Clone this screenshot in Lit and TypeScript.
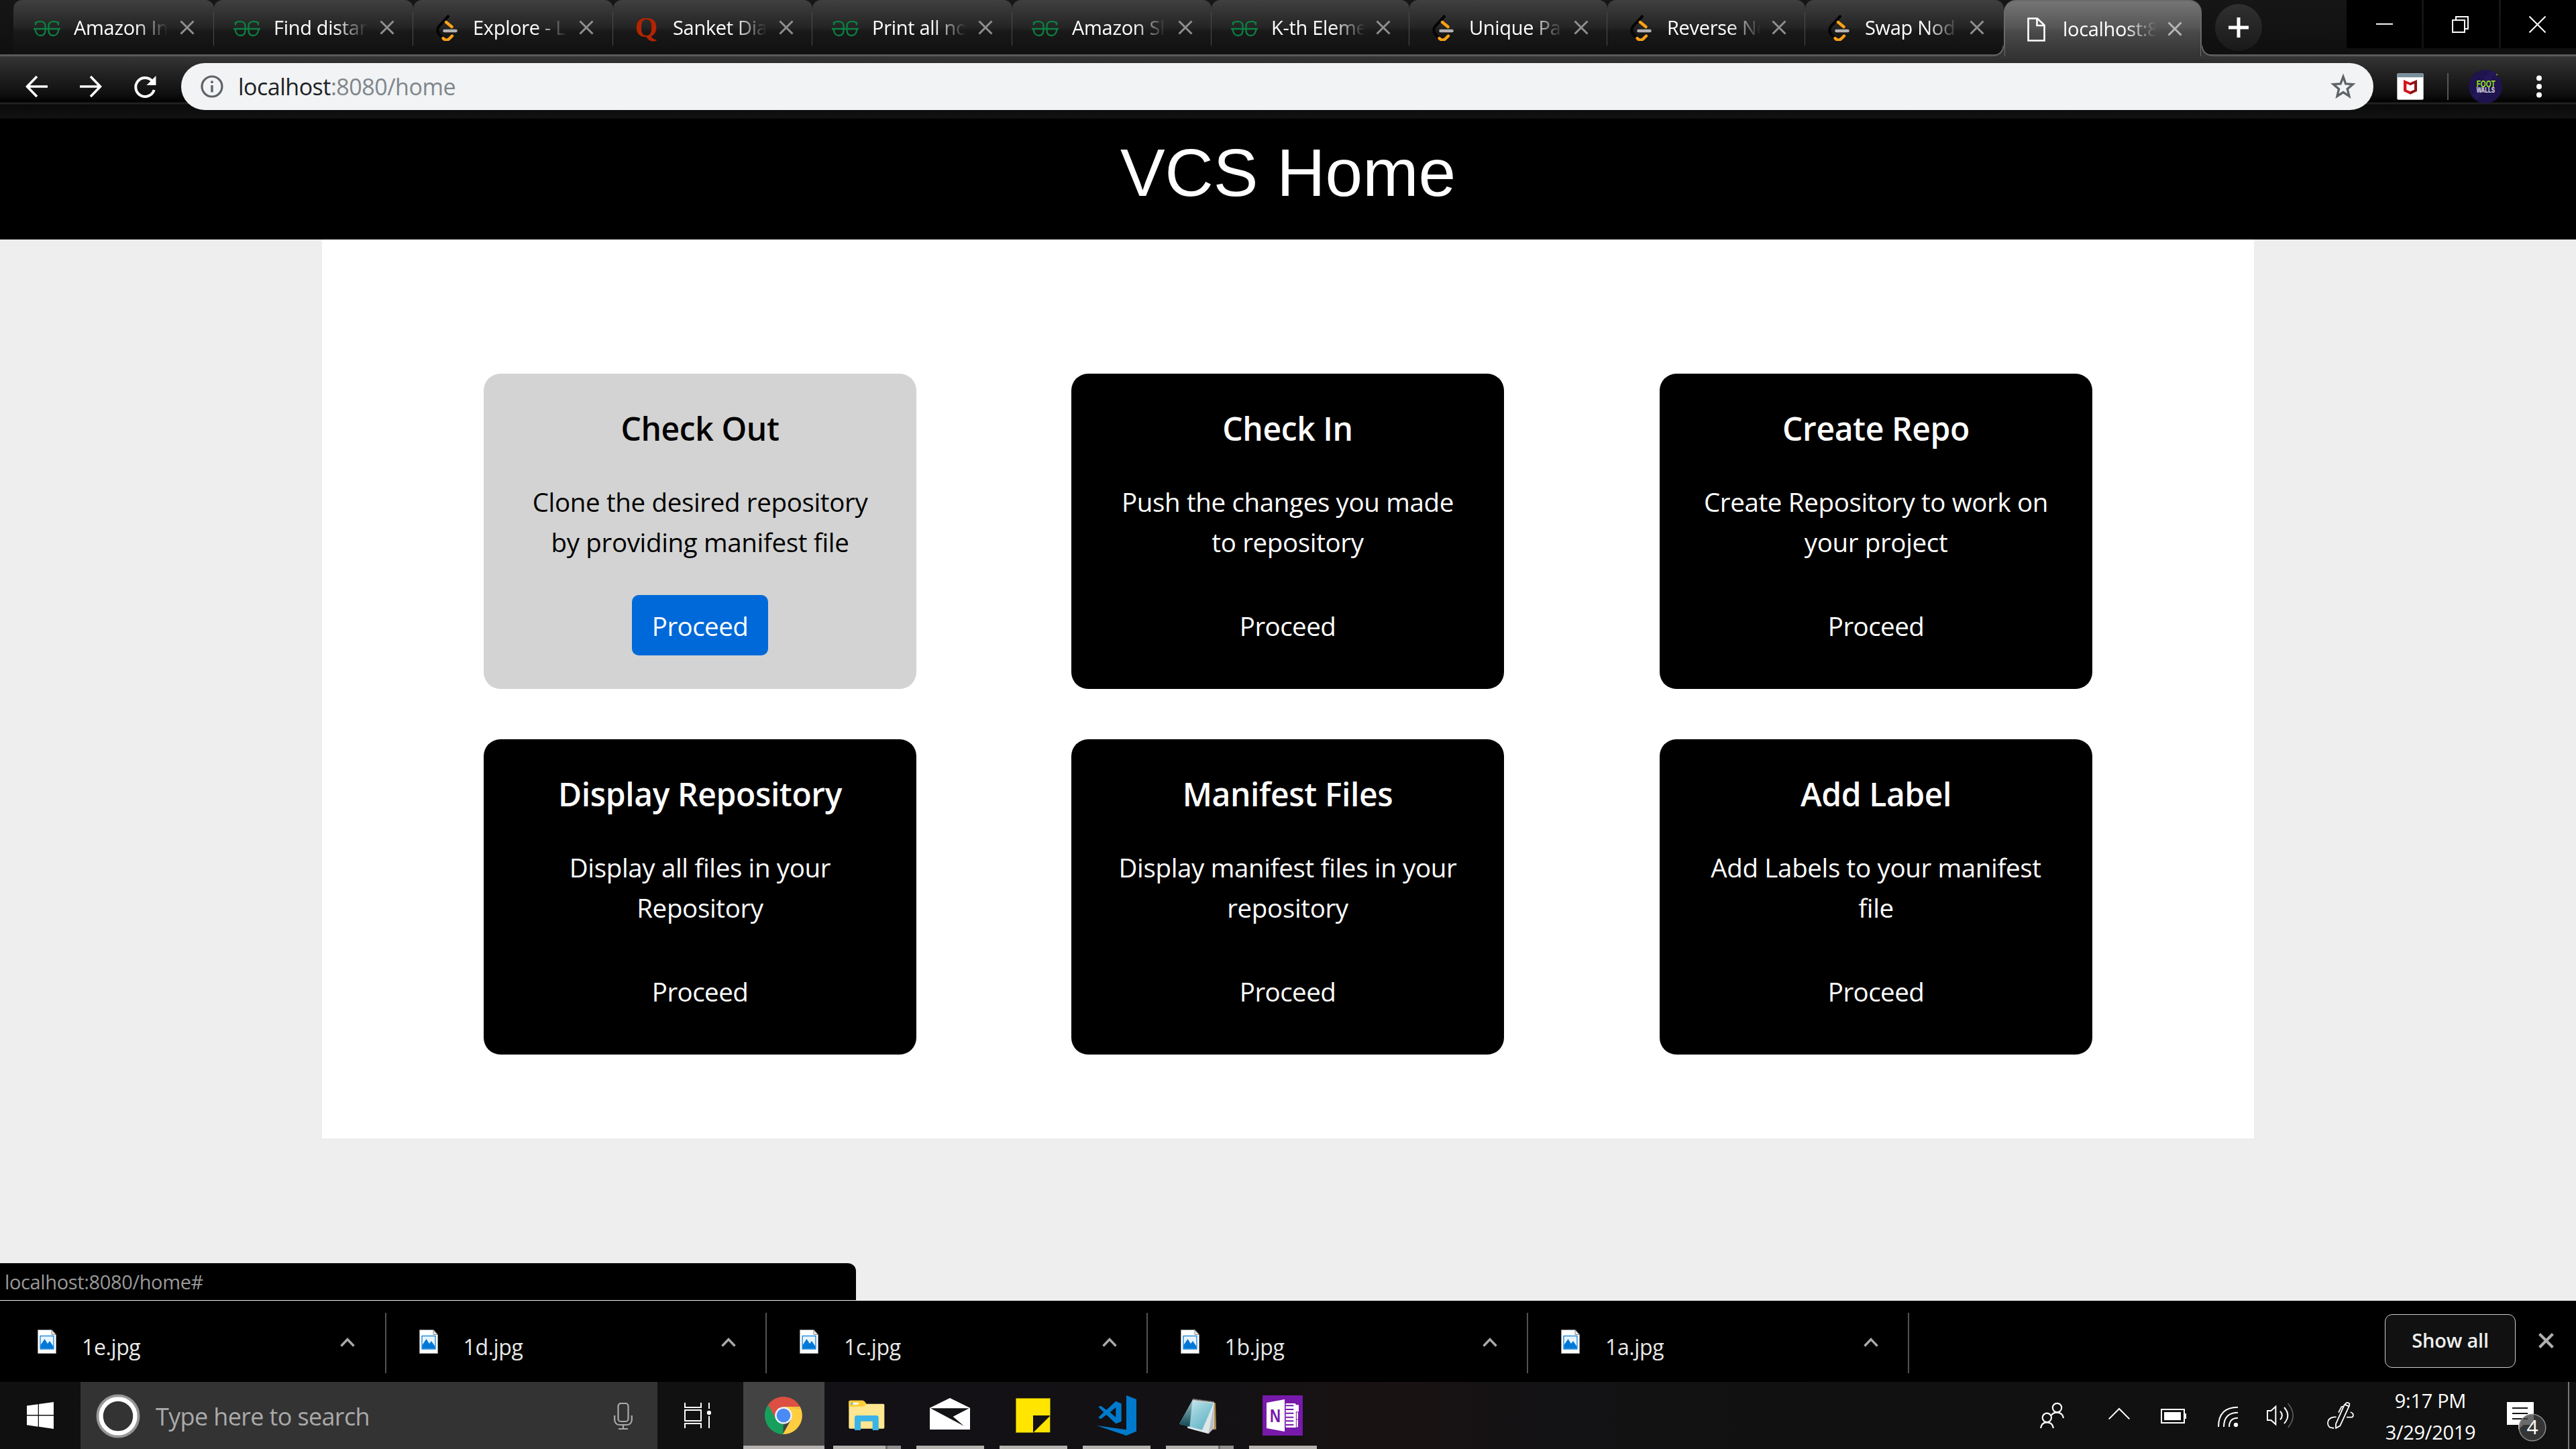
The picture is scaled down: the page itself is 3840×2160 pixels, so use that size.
import { LitElement, html, css, svg } from "lit";
import { customElement } from "lit/decorators.js";
import { styleMap } from "lit/directives/style-map.js";
import { classMap } from "lit/directives/class-map.js";

type Box = [number, number, number, number];

/* Builds an inline icon; the view box may use a finer unit than the drawn size. */
const icon = (w: number, h: number, box: Box, body: unknown) =>
  html`<svg class="icon" width=${w} height=${h} viewBox=${box.join(" ")} fill="none">${body}</svg>`;

/* ---------- favicons ---------- */
const geeks = icon(40, 40, [0, 0, 40, 40], svg`
  <g stroke="#0c8043" stroke-width="2.300">
    <path d="M3 16.500V11.500M3 14Q5 11.200 8.500 11.200H11Q17.500 11.500 17.500 18V24Q17.500 32 10.500 32Q3.500 32 2.500 22"/>
    <path d="M37 16.500V11.500M37 14Q35 11.200 31.500 11.200H29Q22.500 11.500 22.500 18V24Q22.500 32 29.500 32Q36.500 32 37.500 22"/>
    <path d="M0 22H40"/>
  </g>`);

const leet = icon(40, 40, [0, 0, 40, 40], svg`
  <path d="M23 3.500L9.500 18Q5 24 9.500 30L14.500 35.500" stroke="#050505" stroke-width="4.200" stroke-linecap="round"/>
  <path d="M20 12L28.500 19M15.500 36Q20.500 41 25 36.500L29 32.500" stroke="#ffa116" stroke-width="4.400" stroke-linecap="round"/>
  <path d="M17.500 25H34.500" stroke="#b3b3b3" stroke-width="4.600" stroke-linecap="round"/>`);

const quora = html`<span class="quora">Q</span>`;

const page = icon(40, 40, [0, 0, 40, 40], svg`
  <path d="M8.500 4.500H22L32.500 14.500V37.500H8.500ZM21.500 4.500V15H32.500" stroke="#fff" stroke-width="2.600"/>`);

const cross = (size: number, w: number) =>
  icon(size, size, [0, 0, 22, 22], svg`<path d="M1.500 1.500L20.500 20.500M20.500 1.500L1.500 20.500" stroke="currentColor" stroke-width=${w}/>`);

interface Tab { title: string; fav: unknown; width: number; active?: boolean }
const TABS: Tab[] = [
  { title: "Amazon In", fav: geeks, width: 299 },
  { title: "Find distan", fav: geeks, width: 297 },
  { title: "Explore - L", fav: leet, width: 298 },
  { title: "Sanket Dia", fav: quora, width: 297 },
  { title: "Print all no", fav: geeks, width: 298 },
  { title: "Amazon Sl", fav: geeks, width: 297 },
  { title: "K-th Eleme", fav: geeks, width: 295 },
  { title: "Unique Pa", fav: leet, width: 295 },
  { title: "Reverse No", fav: leet, width: 295 },
  { title: "Swap Nod", fav: leet, width: 296 },
  { title: "localhost:8", fav: page, width: 295, active: true },
];

/* ---------- browser controls ---------- */
const back = icon(34, 34, [0, 0, 34, 34], svg`<path d="M33 17H3M17 2L2.500 17L17 32" stroke="#fff" stroke-width="3.600"/>`);
const forward = icon(34, 34, [0, 0, 34, 34], svg`<path d="M1 17H31M17 2L31.500 17L17 32" stroke="#fff" stroke-width="3.600"/>`);
const reload = icon(36, 36, [0, 0, 36, 36], svg`
  <path d="M29.500 9.500A14 14 0 1 0 31.700 22" stroke="#fff" stroke-width="4"/><path d="M34.500 1V15H20.500Z" fill="#fff"/>`);
const info = icon(34, 34, [0, 0, 34, 34], svg`
  <circle cx="17" cy="17" r="15" stroke="#5f6368" stroke-width="3.200"/>
  <path d="M17 15V25.500M17 8.500V12" stroke="#5f6368" stroke-width="3.400"/>`);
const star = icon(40, 40, [98, 327, 120, 120], svg`
  <path d="M158 343L169 374.500L201 377L176.500 398L184.500 430L158 412.500L131 430L138.500 398L114 377L146 374.500Z" stroke="#5f6368" stroke-width="10"/>`);
const shield = icon(40, 40, [399, 327, 120, 120], svg`
  <rect x="400" y="328" width="118" height="118" rx="8" fill="#fff" stroke="#aaa" stroke-width="3"/>
  <path d="M400 346V335Q400 328 408 328H510Q518 328 518 335V346Z" fill="#78909c"/>
  <path d="M429 357L459 370L459 382L442 374V401L459 409V422L429 408Z" fill="#d5151c"/>
  <path d="M489 357L459 370L459 382L477 374V401L459 409V422L489 408Z" fill="#8f1216"/>`);
const avatar = icon(50, 50, [720, 312, 150, 150], svg`
  <circle cx="795" cy="387" r="75" fill="#1f144e"/>
  <path d="M735 430L815 315L840 326L760 440Z" fill="#25185a"/>
  <circle cx="846" cy="334" r="4" fill="#5c8a2c"/>
  <text x="755" y="390" class="badge-text" fill="#94e01e" font-size="42" textLength="84" lengthAdjust="spacingAndGlyphs">FOOT</text>
  <text x="755" y="413" class="badge-text" fill="#e8e6ee" font-size="30" textLength="82" lengthAdjust="spacingAndGlyphs">WALLS</text>`);
const dots = icon(10, 34, [0, 0, 10, 34], svg`
  <g fill="#fff"><circle cx="5" cy="4.500" r="4"/><circle cx="5" cy="17" r="4"/><circle cx="5" cy="29.500" r="4"/></g>`);
const plus = icon(30, 30, [0, 0, 30, 30], svg`<path d="M15 0V30M0 15H30" stroke="#fff" stroke-width="5"/>`);

const minimise = icon(25, 25, [0, 0, 25, 25], svg`<path d="M0 11.800H25" stroke="#fff" stroke-width="2"/>`);
const restore = icon(25, 25, [0, 0, 25, 25], svg`
  <path d="M1 6H19V24H1ZM6 5V1H24V19H20" stroke="#fff" stroke-width="2"/>`);
const closeWin = icon(25, 25, [0, 0, 25, 25], svg`<path d="M0.500 0.500L24.500 24.500M24.500 0.500L0.500 24.500" stroke="#fff" stroke-width="2"/>`);

/* ---------- download shelf ---------- */
const picture = icon(28, 36, [0, 0, 28, 36], svg`
  <path d="M0.500 0.500H21L27.500 7.500V35.500H0.500Z" fill="#fff" stroke="#999"/>
  <path d="M21 0.500V7.500H27.500Z" fill="#e8e8e8" stroke="#888"/>
  <rect x="4" y="9.500" width="20" height="19.500" fill="#e8f3fc" stroke="#0078d7" stroke-width="1.200"/>
  <path d="M4.500 28.500V23L10.500 14L15 21L18 17L23.500 25V28.500Z" fill="#0078d7"/>`);
const chevron = icon(22, 14, [0, 0, 22, 14], svg`<path d="M1.500 12.500L11 2.500L20.500 12.500" stroke="#aaa" stroke-width="3.400"/>`);

/* ---------- task bar ---------- */
const windows = icon(40, 40, [0, 0, 40, 40], svg`
  <path d="M0 5.600L16.700 3.200V19H0ZM18 3L40 0V19H18ZM0 20.600H16.700V36.700L0 34.200ZM18 20.600H40V40L18 36.800Z" fill="#fff"/>`);
const cortana = icon(66, 66, [0, 0, 66, 66], svg`
  <circle cx="33" cy="33" r="30.500" stroke="#979797" stroke-width="4"/>
  <circle cx="33" cy="33" r="25.500" stroke="#fff" stroke-width="6.500"/>`);
const mic = icon(28, 40, [0, 0, 28, 40], svg`
  <g stroke="#aaa" stroke-width="2.200"><rect x="6.500" y="1" width="15" height="27" rx="4"/>
  <path d="M1.200 19V26Q2 33 9 33H19Q26 33 26.800 26V19M14 33V39M7 39H21"/></g>`);
const taskView = icon(40, 38, [90, 93, 120, 114], svg`
  <g stroke="#fff" stroke-width="6"><path d="M93 93V114H165V93M93 207V186H165V207"/><rect x="93" y="126" width="72" height="48"/>
  <path d="M201 93V120M201 153V207"/></g><circle cx="201" cy="138" r="9.500" fill="#fff"/>`);

const chrome = icon(121, 95, [354, 0, 363, 285], svg`
  <path d="M534 150L532 234A84 84 0 0 1 465 102Z" fill="#17a05d"/>
  <path d="M465 102L500 165L534 150L534 111H608A84 84 0 0 0 465 102Z" fill="#dd4f43"/>
  <path d="M534 111H608A84 84 0 0 1 531 234L568 168L534 150Z" fill="#ffcd40"/>
  <path d="M560 113H608L612 124Z" fill="#e2a83a" opacity=".5"/>
  <circle cx="534" cy="150" r="38.500" fill="#f1f1f1"/><circle cx="534" cy="150" r="31" fill="#4a8af4"/>`);
const folder = icon(101, 95, [756, 0, 303, 285], svg`
  <path d="M826 88Q826 83 832 83H888L904 98H980Q985 98 985 103V204Q985 209 980 209H832Q826 209 826 204Z" fill="#ffe690"/>
  <path d="M826 88Q826 83 832 83H888Q896 83 904 97Q898 110 888 110H826Z" fill="#fdcc37"/>
  <rect x="836" y="93" width="34" height="8" fill="#fff"/><rect x="836" y="93" width="8" height="8" fill="#39b1e5"/>
  <path d="M852 216V160Q852 150 862 150H949Q959 150 959 160V216H932V176H879V216Z" fill="#3ab3e8"/>`);
const mail = icon(101, 95, [1128, 0, 303, 285], svg`
  <path d="M1188 116L1278 72L1368 116V213H1188Z" fill="#fff"/>
  <path d="M1191 118H1364L1292 155L1341 197Z" fill="#131215"/>`);
const sticky = icon(101, 95, [30, 0, 303, 285], svg`
  <path d="M103.500 73.500H256.500V151L181 226.500H103.500Z" fill="#ffe500" stroke="#8e8108" stroke-width="3"/>
  <path d="M180 150H257L180 227Z" fill="#131215"/><path d="M256 153V226H182Z" fill="#ffe500"/>`);
const code = icon(101, 95, [402, 0, 303, 285], svg`
  <path d="M597 60L642 78V221L597 240L464 195L597 214Z" fill="#007acc"/>
  <path fill-rule="evenodd" d="M550 86L575 97V177L550 187L508 147L483 166L474 161V157L496 136L474 114V110L483 107L508 125ZM550 114L524 136L550 158Z" fill="#007acc"/>`);
const notepad = icon(101, 95, [774, 0, 303, 285], svg`
  <defs><linearGradient id="np" x1="0" y1="0" x2="1" y2="1"><stop offset="0" stop-color="#e4f5f8"/><stop offset=".5" stop-color="#8fcbd8"/><stop offset="1" stop-color="#58aebf"/></linearGradient>
  <linearGradient id="nd" x1="0" y1="0" x2="0" y2="1"><stop offset="0" stop-color="#9ac4cc"/><stop offset="1" stop-color="#124651"/></linearGradient></defs>
  <path d="M985 95L996 93L999 212L985 214Z" fill="#b08c4c"/>
  <path d="M893 80L990 92V205L964 232L870 206Z" fill="#dfe6e8"/>
  <path d="M990 92L988 208L964 232Z" fill="#b9c0c3"/>
  <path d="M893 82L987 97L936 215L834 188Z" fill="url(#np)"/>
  <path d="M893 82L880 200L834 188Z" fill="url(#nd)"/>
  <path d="M894 80L990 93" stroke="#c9c9c9" stroke-width="10" stroke-dasharray="4 3"/>
  <path d="M893 76L990 89" stroke="#555" stroke-width="4" stroke-dasharray="3 4"/>`);
const oneNote = icon(101, 95, [1146, 0, 303, 285], svg`
  <rect x="1206" y="60" width="180" height="180" fill="#7719aa"/>
  <path d="M1224 93L1305 78V222L1224 207Z" fill="#fff"/>
  <path d="M1310 96H1352L1357 103H1368V134H1365V202H1357V204H1310Z" fill="#fff"/>
  <g stroke="#7719aa" stroke-width="6"><path d="M1310 106H1345M1310 123H1345M1310 140H1345M1310 158H1345M1310 175H1345M1310 192H1345"/></g>
  <path d="M1357 132V202M1357 135H1368M1357 168H1368" stroke="#7719aa" stroke-width="3"/>
  <text x="1239" y="180" class="badge-text" fill="#7719aa" font-size="82" textLength="48" lengthAdjust="spacingAndGlyphs">N</text>`);

const people = icon(90, 100, [30, 0, 270, 300], svg`
  <g stroke="#fff" stroke-width="6.500"><circle cx="139.500" cy="115.500" r="20"/><circle cx="94" cy="160" r="20"/>
  <path d="M67 207V203Q72 181 94 181Q117 181 122 203V207M114 150Q118 138 139 136Q163 138 167 158V162"/></g>`);
const up = icon(80, 100, [300, 0, 240, 300], svg`<path d="M371 166L417 120L463 166" stroke="#fff" stroke-width="6"/>`);
const battery = icon(90, 100, [540, 0, 270, 300], svg`
  <rect x="606" y="123" width="102" height="60" stroke="#fff" stroke-width="6"/><path d="M618 135H693V171H618ZM708 141H717V165H708Z" fill="#fff"/>`);
const wifi = icon(70, 100, [810, 0, 210, 300], svg`
  <g stroke="#fff" stroke-width="6"><path d="M861 201Q861 113 948 113M885 201Q885 137 948 137M909 201Q909 161 948 161"/></g><circle cx="939" cy="192" r="9.500" fill="#fff"/>`);
const volume = icon(90, 100, [1020, 0, 270, 300], svg`
  <g stroke="#fff" stroke-width="6"><path d="M1117 110V190L1096 171H1080V129H1096Z"/><path d="M1137 131Q1154 150 1137 169M1155 114Q1187 150 1155 186"/></g>
  <path d="M1172 97Q1217 150 1172 204" stroke="#5c5c5c" stroke-width="5"/>`);
const pen = icon(80, 100, [1290, 0, 240, 300], svg`
  <g stroke="#fff" stroke-width="5.500" stroke-linejoin="round"><path d="M1386 188L1424 103L1433 94Q1440 90 1447 97L1446 107L1405 196L1386 207Z"/>
  <path d="M1424 101L1445 109M1398 137L1410 114Q1414 107 1420 112M1388 157H1378Q1350 160 1350 186Q1352 208 1378 206M1451 135Q1467 140 1463 154L1458 158H1434"/></g>`);
const notice = icon(112, 100, [3716, 2060, 112, 100], svg`
  <path d="M3737 2090H3777V2124H3762L3754 2131V2124H3737Z" fill="#fff"/>
  <path d="M3745 2099H3768M3745 2107H3768M3745 2115H3768" stroke="#151515" stroke-width="2.200"/>
  <circle cx="3775" cy="2128" r="19.800" fill="#404040" fill-opacity=".78" stroke="#8c8c8c" stroke-width="1.500"/>
  <text x="3775" y="2138" class="count" fill="#fff" font-size="30" text-anchor="middle">4</text>`);

interface App { art: unknown; grouped?: boolean; current?: boolean }
const APPS: App[] = [
  { art: chrome, current: true }, { art: folder, grouped: true }, { art: mail }, { art: sticky },
  { art: code }, { art: notepad, grouped: true }, { art: oneNote },
];

interface Card { title: string; lines: [string, string]; hover?: boolean }
const CARDS: Card[] = [
  { title: "Check Out", lines: ["Clone the desired repository", "by providing manifest file"], hover: true },
  { title: "Check In", lines: ["Push the changes you made", "to repository"] },
  { title: "Create Repo", lines: ["Create Repository to work on", "your project"] },
  { title: "Display Repository", lines: ["Display all files in your", "Repository"] },
  { title: "Manifest Files", lines: ["Display manifest files in your", "repository"] },
  { title: "Add Label", lines: ["Add Labels to your manifest", "file"] },
];

const FILES = ["1e.jpg", "1d.jpg", "1c.jpg", "1b.jpg", "1a.jpg"];

@customElement("app-root")
export class AppRoot extends LitElement {
  static styles = css`
    :host { display: flex; flex-direction: column; width: 3840px; height: 2160px; overflow: hidden; background: #eee;
      font-family: "Open Sans", "Noto Sans", sans-serif; letter-spacing: -0.3px; }
    * { box-sizing: border-box; margin: 0; }
    .icon { display: block; flex: none; }

    .strip { display: flex; height: 81px; padding-left: 20px; background: linear-gradient(#161616, #0f0f0f); }
    .tab { display: flex; align-items: center; flex: none; height: 81px; padding-left: 29px; color: #8f8f8f;
      border-radius: 13px 13px 0 0; background: linear-gradient(#404040, #242424 50%, #191919 58%, #101010);
      position: relative; }
    .tab:first-child { padding-left: 30px; }
    .tab:not(.active)::after { content: ""; position: absolute; right: -1px; top: 18px; width: 2px; height: 50px; background: #4c4c4c; }
    .tab.last::after { display: none; }
    .tab.active { height: 84px; background: linear-gradient(#757575, #555 48%, #4a4a4a 55%, #333);
      border: 2px solid #6a6a6a; border-top-width: 2px; border-bottom: 0; border-radius: 18px 18px 0 0; padding-left: 26px; color: #b5b5b5; }
    .tab.active::before, .tab.active::after { content: ""; position: absolute; bottom: 0; width: 16px; height: 16px; }
    .tab.active::before { left: -17px; background: radial-gradient(circle at 0 0, transparent 13px, #666 14px, #666 15px, #363636 16px); }
    .tab.active::after { right: -17px; background: radial-gradient(circle at 100% 0, transparent 13px, #666 14px, #666 15px, #363636 16px); }
    .fav { display: flex; width: 40px; justify-content: center; flex: none; }
    .quora { font: bold 43px/40px "Liberation Serif", serif; color: #b32400; }
    .name { flex: none; width: 139px; margin-left: 20px; white-space: nowrap; color: #fff; font-size: 29px; line-height: 44px;
      margin-right: 19px; -webkit-mask-image: linear-gradient(to right, #000 92px, transparent 140px); mask-image: linear-gradient(to right, #000 92px, transparent 140px); }
    .tight .name { margin-right: 17px; }
    .new { display: flex; align-items: center; justify-content: center; width: 70px; height: 70px; margin: 6px 0 0 20px; border-radius: 50%;
      background: linear-gradient(#303030, #191919); }
    .controls { display: flex; gap: 3px; margin-left: auto; height: 72px; }
    .control { display: flex; align-items: center; justify-content: center; width: 112px; background: #000; padding-right: 3px; }
    .control:first-child { padding-right: 0; }

    .bar { display: flex; align-items: flex-start; height: 96px; border-top: 3px solid #5a5a5a; padding: 10px 0 0 38px;
      background: linear-gradient(#353535, #232323 25px, #101010 55px, #040404 66px, #000 68px, #202020 69px, #222 71px, #0a0a0a 72px, #121212 92px, #000 93px); }
    .nav { display: flex; gap: 46px; padding-top: 18px; width: 232px; flex: none; }
    .omni { display: flex; align-items: center; width: 3268px; height: 70px; border-radius: 35px; background: #f1f3f4; padding: 0 25px 0 29px; flex: none; }
    .url { margin-left: 22px; flex: 1; font-size: 34px; line-height: 50px; color: #80868b; white-space: nowrap; letter-spacing: -0.5px; }
    .url b { font-weight: 400; color: #202124; }
    .tools { display: flex; align-items: center; height: 70px; padding-left: 35px; }
    .rule { width: 2px; height: 40px; background: #565656; margin: 0 30px 0 35px; }
    .tools .icon:last-child { margin-left: 50px; }
    .badge-text { font-family: "Liberation Sans", sans-serif; font-weight: 700; letter-spacing: 0; }

    .head { height: 180px; flex: none; background: #000; color: #fff; text-align: center; font: 100px/120px "Liberation Sans", Arial, sans-serif; padding-top: 20px; letter-spacing: 0; }
    .main { flex: 1; min-height: 0; display: flex; flex-direction: column; }
    .panel { width: 2880px; height: 1340px; margin: 0 auto; background: #fff; padding: 200px 241px 0;
      display: grid; grid-template-columns: 876px 877px 645px; grid-auto-rows: 470px; row-gap: 75px; flex: none; }
    .card { display: flex; flex-direction: column; align-items: center; width: 645px; background: #000; color: #fff; border-radius: 25px; padding-top: 52px; text-align: center; white-space: nowrap; }
    .card.hover { background: #d3d3d3; color: #000; }
    .card h5 { font-size: 48px; line-height: 60px; font-weight: 600; letter-spacing: -0.4px; }
    .card p { margin-top: 49px; font-size: 38.5px; line-height: 60px; letter-spacing: -0.35px; }
    .line { display: block; }
    .go { display: block; margin-top: 49px; width: 203px; height: 90px; border-radius: 10px; color: #fff; font-size: 38.5px; line-height: 93px; letter-spacing: -0.55px; }
    .hover .go { background: #0069d9; }

    .status { margin-top: auto; width: 1276px; height: 55px; margin-bottom: 1px; background: #000; color: #999; border-radius: 0 12px 0 0; padding-left: 7px;
      font-size: 29px; line-height: 55px; letter-spacing: -0.36px; }

    .shelf { display: flex; height: 121px; flex: none; background: #000; color: #e8e8e8; }
    .file { display: flex; width: 567.5px; padding: 43px 46px 0 49px; position: relative; flex: none; }
    .file:first-child { width: 575.5px; padding-left: 56px; padding-right: 47px; }
    .file::after { content: ""; position: absolute; right: 0; top: 18px; width: 2px; height: 90px; background: #525252; }
    .file span { flex: 1; margin-left: 38px; font-size: 32px; line-height: 51px; letter-spacing: -0.4px; }
    .file .icon:last-child { margin-top: 12px; }
    .all { width: 195px; height: 80px; margin: 20px 34px 0 auto; border: 1.5px solid #ccc; border-radius: 11px; background: #111; color: #eee;
      font-size: 29px; font-weight: 600; line-height: 75px; text-align: center; letter-spacing: -0.2px; }
    .dismiss { color: #b0b0b0; margin: 48px 33px 0 0; }

    .task { display: flex; height: 100px; flex: none; color: #fff;
      background: linear-gradient(to right, #101010, #111 1050px, #131115 1230px, #131114 1800px, #191212 2080px, #131214 2300px, #111 2700px); }
    .start { display: flex; align-items: center; justify-content: center; width: 120px; }
    .search { display: flex; align-items: center; width: 860px; background: #333; padding: 1px 37px 0 23px; color: #aaa; }
    .search span { flex: 1; margin-left: 23px; font-size: 36px; line-height: 50px; padding-top: 2px; letter-spacing: -0.65px; }
    .view { display: flex; align-items: center; width: 128px; padding-left: 40px; }
    .apps { display: flex; gap: 23px; }
    .app { width: 101px; height: 100px; }
    .app.current { width: 121px; background: #434343; margin-right: -10px; }
    .mark { display: flex; height: 5px; background: #b5b1ae; }
    .mark.grouped { background: linear-gradient(to right, #b5b1ae 78px, #6b6968 78px, #6b6968 81px, #918e8d 81px); }
    .tray { display: flex; margin-left: auto; }
    .clock { width: 186px; text-align: center; font-size: 29px; line-height: 47px; padding-top: 4px; }
    .clock div { white-space: nowrap; }
    .peek { width: 12px; border-left: 2px solid #777; }
    .count { font-family: "Open Sans", "Noto Sans", sans-serif; }
  `;

  private tab(t: Tab, i: number) {
    const classes = { tab: true, active: !!t.active, tight: t.width < 297, last: i === TABS.length - 2 };
    return html`<div class=${classMap(classes)} style=${styleMap({ width: `${t.width}px` })}>
      <span class="fav">${t.fav}</span><span class="name">${t.title}</span>${cross(22, 3)}
    </div>`;
  }

  render() {
    return html`
      <div class="strip">
        ${TABS.map((t, i) => this.tab(t, i))}
        <div class="new">${plus}</div>
        <div class="controls">${[minimise, restore, closeWin].map((c) => html`<div class="control">${c}</div>`)}</div>
      </div>
      <div class="bar">
        <div class="nav">${back}${forward}${reload}</div>
        <div class="omni">${info}<span class="url"><b>localhost</b>:8080/home</span>${star}</div>
        <div class="tools">${shield}<span class="rule"></span>${avatar}${dots}</div>
      </div>
      <header class="head">VCS Home</header>
      <div class="main">
        <div class="panel">
          ${CARDS.map((c) => html`<section class=${classMap({ card: true, hover: !!c.hover })}>
            <h5>${c.title}</h5>
            <p>${c.lines.map((l) => html`<span class="line">${l}</span>`)}</p>
            <a class="go">Proceed</a>
          </section>`)}
        </div>
        <div class="status">localhost:8080/home#</div>
      </div>
      <div class="shelf">
        ${FILES.map((f) => html`<div class="file">${picture}<span>${f}</span>${chevron}</div>`)}
        <div class="all">Show all</div>
        <div class="dismiss">${cross(23, 4)}</div>
      </div>
      <div class="task">
        <div class="start">${windows}</div>
        <div class="search">${cortana}<span>Type here to search</span>${mic}</div>
        <div class="view">${taskView}</div>
        <div class="apps">
          ${APPS.map((a) => html`<div class=${classMap({ app: true, current: !!a.current })}>${a.art}<div class=${classMap({ mark: true, grouped: !!a.grouped })}></div></div>`)}
        </div>
        <div class="tray">${people}${up}${battery}${wifi}${volume}${pen}
          <div class="clock"><div>9:17 PM</div><div>3/29/2019</div></div>
          ${notice}<div class="peek"></div>
        </div>
      </div>`;
  }
}
